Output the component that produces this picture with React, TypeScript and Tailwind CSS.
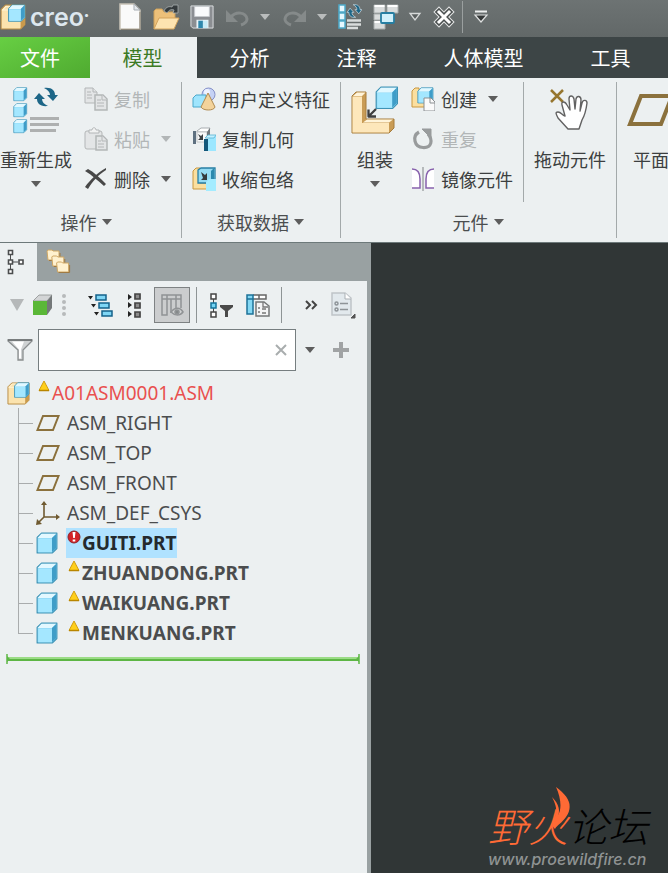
import type { ReactNode } from 'react';
import clsx from 'clsx';

type IconProps = { className?: string };

const tabs = [
  { label: '分析', width: 'w-[107px]' },
  { label: '注释', width: 'w-[107px]' },
  { label: '人体模型', width: 'w-[147px]' },
  { label: '工具', width: 'w-[107px]' },
];

const datums = ['ASM_RIGHT', 'ASM_TOP', 'ASM_FRONT'];

const parts = [
  { name: 'GUITI.PRT', selected: true },
  { name: 'ZHUANDONG.PRT' },
  { name: 'WAIKUANG.PRT' },
  { name: 'MENKUANG.PRT' },
];

/* ---------- shared shapes ---------- */

function Caret({ className = 'text-[#5d5d5d]' }: IconProps) {
  return (
    <svg width="12" height="8" viewBox="0 0 12 8" className={clsx('shrink-0', className)}>
      <path d="M1 1h10L6 7z" fill="currentColor" />
    </svg>
  );
}

// small blue block, 20x20 in its own units
function Block() {
  return (
    <g strokeLinejoin="round">
      <path d="M1 5l4-4h14v14l-4 4H1z" fill="#8fd8f5" stroke="#3f93b5" />
      <path d="M1.5 5.5L5 1.5h13.5l-4 4z" fill="#e2f8ff" />
      <path d="M14.5 5.5l4-4v13l-4 4z" fill="#3f9dc8" />
      <path d="M2 6h12.500v12.500H2z" fill="#a4e7ff" />
    </g>
  );
}

function CubeIcon() {
  return (
    <svg width="22" height="22" viewBox="0 0 20 20" className="shrink-0">
      <Block />
    </svg>
  );
}

function AsmIcon({ size = 24 }: { size?: number }) {
  return (
    <svg width={size} height={size} viewBox="0 0 24 24" className="shrink-0">
      <path d="M1 5l4-4h18v18l-4 4H1z" fill="#fbe3ae" stroke="#b98d45" strokeLinejoin="round" />
      <path d="M19 10l4-4v13l-4 4z" fill="#c99a4c" />
      <path d="M2 5.500h6M2 6l3.500-4H9" stroke="#fff3d6" fill="none" />
      <g transform="translate(7 0) scale(.84)">
        <Block />
      </g>
    </svg>
  );
}

/* ---------- quick access icons ---------- */

function NewIcon() {
  return (
    <svg width="24" height="28" viewBox="0 0 24 28">
      <path d="M2 1h14l6 6v19H2z" fill="#fafafa" stroke="#c9c3b8" strokeWidth="1.500" />
      <path d="M3 26.500h19V9" fill="none" stroke="#8c8578" />
      <path d="M16 1v6h6z" fill="#e4e8ec" stroke="#a7adb3" />
    </svg>
  );
}

function OpenIcon() {
  return (
    <svg width="28" height="28" viewBox="0 0 28 28">
      <path d="M2 26V8l2-2h6l2 3h11v6" fill="#edc079" stroke="#cda05a" />
      <path d="M2 26l5-11h20l-5 11z" fill="#fde3b0" stroke="#d3a35d" />
      <path d="M12 8c2-4 5-5 8-4l1-2h5v8h-5l1-3c-3-1-5 0-7 3z" fill="#353b3d" stroke="#a9b0b0" strokeWidth=".8" />
    </svg>
  );
}

function SaveIcon() {
  return (
    <svg width="24" height="28" viewBox="0 0 26 28">
      <path d="M1 2h24v24H3l-2-2z" fill="#8b8e92" stroke="#e1e4e6" />
      <path d="M5 2.500h16v11H5z" fill="#fafbfc" stroke="#c6c9cc" />
      <path d="M7 17h13v9H7z" fill="#e9f3f7" />
      <path d="M9 18h5v8H9z" fill="#2e87ac" />
      <path d="M14 18h5v8h-5z" fill="#c7ebf7" />
    </svg>
  );
}

function UndoIcon({ className }: IconProps) {
  return (
    <svg width="27" height="22" viewBox="0 0 27 22" className={className}>
      <path d="M7 11c5-6 15-5 16 2 0 3-3 5-6 6" fill="none" stroke="#858a8a" strokeWidth="3" />
      <path d="M2 4v12h12z" fill="#858a8a" />
    </svg>
  );
}

function RegenArrows() {
  return (
    <g fill="#1d6687">
      <path d="M10 1c8-1 11 3 11 7h3l-5 6-6-6h3c0-3-2-5-6-7z" />
      <path d="M14 19c-8 1-11-3-11-7H0l5-6 6 6H8c0 3 2 5 6 7z" />
    </g>
  );
}

function RegenSmallIcon() {
  return (
    <svg width="24" height="26" viewBox="0 0 24 26">
      {[1, 9, 17].map((y) => (
        <rect key={y} x="1" y={y} width="6" height="7" fill="#e6f8ff" stroke="#4daaca" strokeWidth="1.500" />
      ))}
      <path d="M9 16.500h14M9 20.500h14M9 24h11" stroke="#d9dcdc" strokeWidth="2.500" />
      <g transform="translate(9 0) scale(.62 .7)" stroke="#d7e4e9" strokeWidth="1">
        <RegenArrows />
      </g>
    </svg>
  );
}

function WindowsIcon() {
  return (
    <svg width="28" height="26" viewBox="0 0 28 26">
      <g fill="#d9dcdc" stroke="#a7acac">
        <path d="M2 1h11v8H2zM15 1h11v8H15zM2 10h11v6H2zM2 17h11v8H2z" />
      </g>
      <path d="M2.500 2h10M15.500 2h10M2.500 18h10" stroke="#fff" strokeWidth="2" />
      <rect x="9" y="9" width="13" height="10" rx="1" fill="#d1f0fb" stroke="#267ea2" strokeWidth="1.800" />
    </svg>
  );
}

function CloseWindowIcon() {
  return (
    <svg width="24" height="22" viewBox="0 0 24 22" fill="none" strokeLinecap="square">
      <path d="M7 6l10 10M17 6L7 16" stroke="#e4e6e6" strokeWidth="8" />
      <path d="M7 6l10 10M17 6L7 16" stroke="#4c5151" strokeWidth="6" />
      <path d="M7 6l10 10M17 6L7 16" stroke="#fff" strokeWidth="3" />
    </svg>
  );
}

/* ---------- ribbon icons ---------- */

function RegenIcon() {
  return (
    <svg width="48" height="48" viewBox="0 0 48 48">
      {[1, 17, 33].map((y) => (
        <g key={y} transform={`translate(1 ${y}) scale(.72)`}>
          <Block />
        </g>
      ))}
      <g transform="translate(22 1)">
        <RegenArrows />
      </g>
      <path d="M18 32.500h29M18 38.500h29M18 44.500h26" stroke="#aeb0b0" strokeWidth="3" />
    </svg>
  );
}

function CopyIcon() {
  return (
    <svg width="24" height="24" viewBox="0 0 24 24" fill="#e3e5e6" stroke="#b3b6b7">
      <path d="M1 1h8l4 4v11H1z" />
      <path d="M9 1v4h4M3 5h4M3 8h5M3 11h5" />
      <path d="M11 8h8l4 4v11H11z" strokeWidth="1.500" />
      <path d="M18 8v5h5M13 13h4M13 16h7M13 19h7" />
    </svg>
  );
}

function PasteIcon() {
  return (
    <svg width="24" height="24" viewBox="0 0 24 24" fill="#e3e5e6" stroke="#b3b6b7">
      <rect x="1" y="4" width="17" height="18" rx="2" />
      <path d="M5 6V3h3c0-3 4-3 4 0h3v3z" fill="#f1f2f2" />
      <path d="M12 9h7l4 4v10H12z" strokeWidth="1.500" />
      <path d="M18 9v5h5M14 14h3M14 17h6M14 20h6" />
    </svg>
  );
}

function DeleteIcon() {
  return (
    <svg width="24" height="24" viewBox="0 0 24 24" fill="#484848">
      <path d="M1 4l3-2c6 3 12 9 18 15l-2 2C14 14 8 8 1 4z" />
      <path d="M22 1C14 5 6 13 1 20l3 2C9 14 14 8 22 3z" />
    </svg>
  );
}

function FeatureIcon() {
  return (
    <svg width="24" height="24" viewBox="0 0 24 24">
      <circle cx="16.500" cy="7.500" r="6.500" fill="#c5d2f5" stroke="#8590c8" />
      <circle cx="15" cy="5" r="3" fill="#eef2ff" />
      <path d="M1 11l3-3h10v10l-2 2H1z" fill="#9fe5fd" stroke="#4ba8cb" />
      <path d="M16 6l7 14c-1 4-12 4-14 0z" fill="#f3d39b" stroke="#b08a50" />
    </svg>
  );
}

function CopyGeomIcon() {
  return (
    <svg width="24" height="24" viewBox="0 0 24 24">
      <path d="M1 4h3v13H1z" fill="#5e7080" />
      <path d="M5 4l4-3h9l-2 4H5z" fill="#fff" stroke="#a8adb0" />
      <path d="M5 5h10v10H5z" fill="#f8f9f9" stroke="#c3c6c8" />
      <path d="M15 5l3-4v7l-3 2z" fill="#72787c" />
      <path d="M6 7l3 2 2-2v6H6l2-2z" fill="#3c4144" />
      <path d="M12 12h4v12h-4z" fill="#14587a" />
      <path d="M16 12l3-3h5v15h-8z" fill="#9ce7ff" />
      <path d="M13 11l3-3h8l-2 3z" fill="#c3f1ff" stroke="#57b3d3" strokeWidth=".8" />
    </svg>
  );
}

function ShrinkIcon() {
  return (
    <svg width="24" height="24" viewBox="0 0 24 24">
      <path d="M1 4l3-3h4v15h7v6H1z" fill="#fbdf9f" stroke="#c9973e" />
      <path d="M6 3l3-2h14v11l-4 4H6z" fill="#94dbf3" stroke="#277fa4" strokeWidth="1.300" />
      <path d="M19 4l3-3v11l-3 3z" fill="#2b89ad" />
      <path d="M9 5l4 3 2-2v7H9l2-2z" fill="#343a3d" />
      <path d="M14 15l3-3h7v12H14z" fill="#a4ecff" />
    </svg>
  );
}

function AssembleIcon() {
  return (
    <svg width="48" height="48" viewBox="0 0 48 48" strokeLinejoin="round">
      <path d="M1 10l4-4h10v27h28v9l-5 5H1z" fill="#c99c56" stroke="#a67c3c" />
      <path d="M1.500 10.500H11V37h27v9.500H1.500z" fill="#fde7bb" />
      <path d="M2 10l4-3.500h8.500L11 10zM12 36.500l4-3h26l-4 3z" fill="#fff4da" />
      <g transform="translate(24 0) scale(1.180)">
        <Block />
      </g>
      <path d="M25 23l-7 7M17.500 23.500v7H25" fill="none" stroke="#3f3f3f" strokeWidth="2.300" />
    </svg>
  );
}

function CreateIcon() {
  return (
    <svg width="24" height="24" viewBox="0 0 24 24">
      <path d="M1 4l3-3h4v13h7v6H1z" fill="#fbdf9f" stroke="#c9973e" />
      <g transform="translate(6 0) scale(.84)">
        <Block />
      </g>
      <path d="M13 11h7l4 4v9H13z" fill="#fafafa" stroke="#8b8f92" />
      <path d="M19 11v5h5" fill="none" stroke="#8b8f92" />
    </svg>
  );
}

function RepeatIcon() {
  return (
    <svg width="24" height="24" viewBox="0 0 24 24">
      <path d="M8 5C1 9 3 20 12 20.500S22 13 17 7" fill="none" stroke="#989b9c" strokeWidth="3.200" />
      <path d="M11 2h9v9z" fill="#989b9c" stroke="#989b9c" strokeLinejoin="round" />
    </svg>
  );
}

function MirrorIcon() {
  return (
    <svg width="24" height="24" viewBox="0 0 24 24">
      <path d="M1 2c6 0 8 5 8 10v9H1M23 2c-6 0-8 5-8 10v9h8" fill="#fff" stroke="#8862ad" strokeWidth="1.500" />
      <path d="M12 0v24" stroke="#a3a7a8" strokeWidth="1.500" />
    </svg>
  );
}

function DragIcon() {
  return (
    <svg width="42" height="44" viewBox="0 0 42 44">
      <path d="M2 2l12 12M14 2L2 14" stroke="#96762f" strokeWidth="2.500" />
      <path
        d="M19 41l-10-11c-2-4-3-6 0-6 3 0 4 3 7 4L13 17c-1-4 3-4 5 0l3 5-1-11c0-4 4-4 5 0l1 10 1-10c1-4 5-3 5 1l-1 11 2-8c1-4 5-3 5 0-1 8-2 12-5 17l-3 9z"
        fill="#fff"
        stroke="#626262"
        strokeWidth="1.400"
        strokeLinejoin="round"
      />
    </svg>
  );
}

/* ---------- model tree icons ---------- */

function PlaneIcon({ width = 24, height = 18 }: { width?: number; height?: number }) {
  return (
    <svg width={width} height={height} viewBox="0 0 48 36" className="shrink-0">
      <path d="M14 4h31L34 32H3z" fill="none" stroke="#8b713d" strokeWidth="4" />
    </svg>
  );
}

function CsysIcon() {
  return (
    <svg width="24" height="26" viewBox="0 0 24 26" className="shrink-0">
      <path d="M8 3v14h14M8 17l-6 6" fill="none" stroke="#6f5a31" strokeWidth="1.600" />
      <path d="M8 1l3 4H5zM24 17l-4-3v6zM0 25l1-6 5 5z" fill="#6f5a31" />
    </svg>
  );
}

function TreeTabIcon() {
  return (
    <svg width="18" height="26" viewBox="0 0 18 26" fill="#fff" stroke="#4b4d4e" strokeWidth="1.600">
      <path d="M3.500 6v14M6 13h5" strokeWidth="1" />
      <path d="M1.500 1.500h4v4h-4zM1.500 11h4v4h-4zM1.500 20.500h4v4h-4zM12 11h4v4h-4z" />
    </svg>
  );
}

function FoldersIcon() {
  return (
    <svg width="26" height="26" viewBox="0 0 26 26">
      {[0, 6, 12].map((d) => (
        <g key={d} transform={`translate(${d * 0.8} ${d})`}>
          <path d="M2 2l1-1h4l1 1h6v9H3z" fill="#fff1cf" stroke="#cfa765" />
          <path d="M4 11.500h11V4" fill="none" stroke="#a07a42" />
        </g>
      ))}
    </svg>
  );
}

function GreenCubeIcon() {
  return (
    <svg width="22" height="22" viewBox="0 0 22 22">
      <path d="M1 7l6-6h13l-5 6z" fill="#d3d5d6" stroke="#8d9091" strokeWidth=".8" />
      <path d="M15 7l5-6v13l-5 7z" fill="#747879" />
      <path d="M1 7h14v14H1z" fill="#5ab737" />
    </svg>
  );
}

function ExpandIcon() {
  return (
    <svg width="28" height="26" viewBox="0 0 28 26">
      <path d="M2 4h5L4.500 7.500zM5 12h5l-2.500 3.500zM8 20h5l-2.500 3.500z" fill="#222" />
      <path d="M10 3h10v5H10zM13 11h10v5H13zM16 19h10v5H16z" fill="#7fd6f5" stroke="#14628a" strokeWidth="1.500" />
    </svg>
  );
}

function CollapseIcon() {
  return (
    <svg width="16" height="26" viewBox="0 0 16 26">
      <path d="M2 2l4 3-4 3zM2 10l4 3-4 3zM2 19l4 3-4 3z" fill="#222" />
      <path d="M9 2h5v5H9zM9 11h5v5H9zM9 20h5v5H9z" fill="#8b8b8b" stroke="#444" strokeWidth="1.700" />
    </svg>
  );
}

function ColumnsIcon() {
  return (
    <svg width="24" height="24" viewBox="0 0 24 24" fill="none" stroke="#909395" strokeWidth="1.500">
      <path d="M2 2h19v4H2zM2 6h5v16H2zM11 6v14M16 6v9M21 6v9M7 2v4M16 2v4" />
      <path d="M11 19c4-5 9-5 12 0-3 4-8 4-12 0z" fill="#d1d3d4" />
      <circle cx="17" cy="19" r="2" fill="#85898a" />
    </svg>
  );
}

function TreeFilterIcon() {
  return (
    <svg width="26" height="26" viewBox="0 0 26 26">
      <path d="M4.500 6v15" stroke="#484848" />
      <path d="M2 2h5v5H2zM2 20h5v5H2z" fill="#fff" stroke="#444" strokeWidth="1.500" />
      <path d="M2 11h5v5H2z" fill="#75d5f4" stroke="#14739b" strokeWidth="1.500" />
      <path d="M11 13h13v2l-5 4v6h-3v-6l-5-4z" fill="#4a4a4a" />
    </svg>
  );
}

function ColumnSetupIcon() {
  return (
    <svg width="24" height="24" viewBox="0 0 24 24">
      <path d="M7 2h13v4H7M13 2v4" fill="#fff" stroke="#666" strokeWidth="1.500" />
      <path d="M1 2h6v19H1zM1 6h6" fill="#84d8f4" stroke="#1c7298" strokeWidth="1.500" />
      <path d="M10 9h8l5 4v10H10z" fill="#f3f4f5" stroke="#747778" strokeWidth="1.500" />
      <path d="M17 9v5h5M12 15h2M12 19h2M16 16h4M16 20h4" fill="none" stroke="#777" strokeWidth="1.300" />
    </svg>
  );
}

function SettingsDocIcon() {
  return (
    <svg width="26" height="28" viewBox="0 0 26 28">
      <path d="M2 2h13l6 5v17H2z" fill="#e2e9ed" stroke="#bfc4c8" strokeWidth="1.500" />
      <path d="M15 2v6h6" fill="#fff" stroke="#a9afb3" />
      <g fill="none" stroke="#8e9498" strokeWidth="1.500">
        <circle cx="6.500" cy="12.500" r="1.500" />
        <circle cx="6.500" cy="18.500" r="1.500" />
        <path d="M10 12.500h8M10 18.500h8" />
      </g>
      <path d="M25 23v4h-4z" fill="#555" stroke="#555" />
    </svg>
  );
}

function FunnelIcon() {
  return (
    <svg width="26" height="24" viewBox="0 0 26 24" className="shrink-0">
      <path d="M1 2h24v1l-9 9v10h-5V12L1 3z" fill="#cfd2d3" stroke="#8a8e8f" strokeWidth="1.300" />
      <path d="M5 3.500h12l-3 8v9h-2v-9z" fill="#fff" />
      <path d="M1 2h24" stroke="#6a6e6f" strokeWidth="1.500" />
    </svg>
  );
}

function WarningIcon() {
  return (
    <svg width="12" height="12" viewBox="0 0 12 12" className="shrink-0">
      <path d="M6 1l5 9.500H1z" fill="#ffcf1a" stroke="#d19c10" strokeLinejoin="round" />
      <path d="M1 10.500h10" stroke="#b98600" strokeWidth="1.500" />
    </svg>
  );
}

function ErrorIcon() {
  return (
    <svg width="14" height="14" viewBox="0 0 14 14" className="shrink-0">
      <circle cx="7" cy="7" r="6" fill="#d22329" stroke="#8f2226" />
      <path d="M5.500 2h3l-.7 6H6.200zM5.700 9.500h2.600v2H5.700z" fill="#fff" />
    </svg>
  );
}

function Flame() {
  return (
    <svg width="24" height="44" viewBox="0 0 24 44">
      <path d="M6 0c14 10 17 20 10 30-4 6-9 8-11 12C-1 36 5 33 8 28c4-6 3-17-2-28z" fill="#ff6a35" />
      <path d="M2 10c7 7 9 14 5 22l-4 5c-1-5 2-6 3-10 1-6-1-11-4-17zM19 14c1 9-2 16-10 22l-3 4c1-5 11-13 13-26z" fill="#ff6a35" />
    </svg>
  );
}

/* ---------- ribbon pieces ---------- */

function Command({ icon, label, caret, disabled }: { icon: ReactNode; label: string; caret?: boolean; disabled?: boolean }) {
  return (
    <button
      type="button"
      disabled={disabled}
      className={clsx('flex h-10 items-center gap-1.5 whitespace-nowrap', disabled ? 'text-[#b2b6b7]' : 'text-[#3c3f40]')}
    >
      {icon}
      <span>{label}</span>
      {caret && <Caret className={clsx('ml-1', disabled ? 'text-[#b2b6b7]' : 'text-[#5d5d5d]')} />}
    </button>
  );
}

function BigCommand({ icon, label, caret }: { icon: ReactNode; label: string; caret?: boolean }) {
  return (
    <button type="button" className="flex flex-col items-center whitespace-nowrap text-[#3c3f40]">
      <span className="flex h-[62px] items-center">{icon}</span>
      <span className="h-9 leading-9">{label}</span>
      {caret && <Caret className="mt-[3px] text-[#5d5d5d]" />}
    </button>
  );
}

function Group({ label, children, className }: { label?: string; children: ReactNode; className?: string }) {
  return (
    <section className={clsx('flex shrink-0 flex-col', className)}>
      <div className="flex h-[125px] items-start">{children}</div>
      {label && (
        <button type="button" className="flex h-10 items-center justify-center gap-1 text-[#4b4e4f]">
          {label}
          <Caret />
        </button>
      )}
    </section>
  );
}

function Branch({ last }: { last?: boolean }) {
  return (
    <span className="flex h-[30px] w-[18px] shrink-0 flex-col pr-[3px]">
      <span className="h-4 border-b border-l border-[#a9acad]" />
      {!last && <span className="flex-1 border-l border-[#a9acad]" />}
    </span>
  );
}

function ToolButton({ label, children, className }: { label: string; children: ReactNode; className?: string }) {
  return (
    <button type="button" aria-label={label} className={clsx('flex h-9 shrink-0 items-center justify-center', className)}>
      {children}
    </button>
  );
}

function QuickAccess() {
  return (
    <header className="flex h-[37px] items-center bg-linear-to-b from-[#6d7373] to-[#626868] pb-1">
      <div className="flex w-[118px] shrink-0 items-center gap-1">
        <AsmIcon size={26} />
        <span className="font-['Inter'] text-[25px] leading-7 font-semibold text-[#dde7ee]">
          creo<sup className="-top-2 text-[10px]">•</sup>
        </span>
      </div>
      <div className="flex shrink-0 items-center gap-2.5">
        <ToolButton label="新建"><NewIcon /></ToolButton>
        <ToolButton label="打开"><OpenIcon /></ToolButton>
        <ToolButton label="保存"><SaveIcon /></ToolButton>
        <ToolButton label="撤消" className="gap-2"><UndoIcon /><Caret className="text-[#b9bcbc]" /></ToolButton>
        <ToolButton label="重做" className="gap-2"><UndoIcon className="-scale-x-100" /><Caret className="text-[#b9bcbc]" /></ToolButton>
        <ToolButton label="重新生成"><RegenSmallIcon /></ToolButton>
        <ToolButton label="窗口" className="gap-2">
          <WindowsIcon />
          <svg width="14" height="10" viewBox="0 0 14 10">
            <path d="M2 1.500h10L7 8z" fill="#5a5f5f" stroke="#d7d9d9" strokeWidth="1.300" />
          </svg>
        </ToolButton>
        <div className="flex items-center gap-1.5">
          <ToolButton label="关闭"><CloseWindowIcon /></ToolButton>
          <span className="h-8 w-px bg-[#9a9f9f]" />
        </div>
        <ToolButton label="自定义">
          <svg width="16" height="14" viewBox="0 0 16 14">
            <path d="M2 1.500h12" stroke="#eceeee" strokeWidth="2" />
            <path d="M2 5h12l-6 7z" fill="#343838" stroke="#dfe1e1" strokeWidth="1.200" />
          </svg>
        </ToolButton>
      </div>
    </header>
  );
}

function Ribbon() {
  return (
    <div className="flex h-[165px] border-b border-[#6d797a] bg-[#ecf0f1] pt-px text-lg leading-6">
      <Group label="操作" className="w-[181px] pr-2">
        <div className="w-[84px] shrink-0">
          <BigCommand icon={<RegenIcon />} label="重新生成" caret />
        </div>
        <div>
          <Command icon={<CopyIcon />} label="复制" disabled />
          <Command icon={<PasteIcon />} label="粘贴" caret disabled />
          <Command icon={<DeleteIcon />} label="删除" caret />
        </div>
      </Group>
      <span className="mt-[3px] h-[156px] w-px shrink-0 bg-[#a3a9aa]" />
      <Group label="获取数据" className="w-[158px]">
        <div className="pl-2.5">
          <Command icon={<FeatureIcon />} label="用户定义特征" />
          <Command icon={<CopyGeomIcon />} label="复制几何" />
          <Command icon={<ShrinkIcon />} label="收缩包络" />
        </div>
      </Group>
      <span className="mt-[3px] h-[156px] w-px shrink-0 bg-[#a3a9aa]" />
      <Group label="元件" className="w-[275px]">
        <div className="w-[70px] shrink-0 pl-2.5">
          <BigCommand icon={<AssembleIcon />} label="组装" caret />
        </div>
        <div className="w-[112px] shrink-0">
          <Command icon={<CreateIcon />} label="创建" caret />
          <Command icon={<RepeatIcon />} label="重复" disabled />
          <Command icon={<MirrorIcon />} label="镜像元件" />
        </div>
        <span className="mt-[3px] h-[120px] w-px shrink-0 bg-[#a3a9aa]" />
        <div className="pl-2.5">
          <BigCommand icon={<DragIcon />} label="拖动元件" />
        </div>
      </Group>
      <span className="mt-[3px] h-[156px] w-px shrink-0 bg-[#a3a9aa]" />
      <Group>
        <div className="pl-2.5">
          <BigCommand icon={<PlaneIcon width={48} height={36} />} label="平面" />
        </div>
      </Group>
    </div>
  );
}

function ModelTree() {
  return (
    <div className="pt-[7px] font-['Noto_Sans','Noto_Sans_CJK_SC',sans-serif] text-[19px] leading-[30px] text-[#4b4d4e]">
      <div className="flex h-[30px] items-center pl-[7px]">
        <AsmIcon size={23} />
        <span className="ml-2 flex h-[30px] items-start pt-0.5"><WarningIcon /></span>
        <span className="ml-0.5 text-[#e9504f]">A01ASM0001.ASM</span>
      </div>
      <ul className="pl-[18px]">
        {datums.map((name) => (
          <li key={name} className="flex h-[30px] items-center">
            <Branch />
            <PlaneIcon />
            <span className="ml-[7px]">{name}</span>
          </li>
        ))}
        <li className="flex h-[30px] items-center">
          <Branch />
          <CsysIcon />
          <span className="ml-[7px]">ASM_DEF_CSYS</span>
        </li>
        {parts.map((part, i) => (
          <li key={part.name} className="flex h-[30px] items-center">
            <Branch last={i === parts.length - 1} />
            <span className="w-[30px] shrink-0"><CubeIcon /></span>
            <span className={clsx('flex h-[30px] items-start pr-px font-bold', part.selected && 'bg-[#b0e2ff] text-[#242a2d]')}>
              <span className="flex w-4 shrink-0 justify-center pt-0.5">
                {part.selected ? <ErrorIcon /> : <WarningIcon />}
              </span>
              {part.name}
            </span>
          </li>
        ))}
      </ul>
      <svg className="mx-1.5 mt-1.5 block h-[10px] w-[354px]" viewBox="0 0 354 10">
        <path d="M1 4h352" stroke="#9bdc86" strokeWidth="2" />
        <path d="M1 6h352" stroke="#5db645" strokeWidth="2" />
        <path d="M1 0v10M353 0v10" stroke="#5db645" strokeWidth="1.500" />
        <path d="M1 2l3 3-3 3zM353 2l-3 3 3 3z" fill="#5db645" />
      </svg>
    </div>
  );
}

function Sidebar() {
  return (
    <aside className="w-[371px] shrink-0 border-r-4 border-[#99a1a2] bg-[#ecf0f1]">
      <div className="flex h-[38px] items-center bg-[#99a1a2]">
        <button type="button" aria-label="模型树" className="flex h-full w-[37px] items-center justify-center bg-[#ecf0f1] pr-1.5">
          <TreeTabIcon />
        </button>
        <button type="button" aria-label="文件夹" className="ml-2">
          <FoldersIcon />
        </button>
      </div>

      <div className="flex h-12 items-center pl-2.5">
        <div className="flex items-center gap-2">
          <svg width="14" height="12" viewBox="0 0 14 12">
            <path d="M0 0h14L7 12z" fill="#b5b8b9" />
          </svg>
          <GreenCubeIcon />
          <svg width="4" height="24" viewBox="0 0 4 24" fill="#b7babb">
            <circle cx="2" cy="3" r="2" />
            <circle cx="2" cy="9" r="2" />
            <circle cx="2" cy="15" r="2" />
            <circle cx="2" cy="21" r="2" />
          </svg>
        </div>
        <div className="ml-5 flex items-center gap-3">
          <ToolButton label="展开"><ExpandIcon /></ToolButton>
          <ToolButton label="折叠"><CollapseIcon /></ToolButton>
          <ToolButton label="显示列" className="w-9 border border-[#7e8283] bg-[#cbcdce]"><ColumnsIcon /></ToolButton>
        </div>
        <span className="mx-1.5 h-9 w-px bg-[#8e9495]" />
        <div className="ml-1.5 flex items-center gap-[11px]">
          <ToolButton label="树过滤器"><TreeFilterIcon /></ToolButton>
          <ToolButton label="树列"><ColumnSetupIcon /></ToolButton>
          <span className="h-9 w-px bg-[#8e9495]" />
        </div>
        <div className="ml-[22px] flex items-center gap-3">
          <ToolButton label="更多">
            <svg width="14" height="10" viewBox="0 0 14 10">
              <path d="M2 1l4 4-4 4M8 1l4 4-4 4" fill="none" stroke="#444" strokeWidth="2" />
            </svg>
          </ToolButton>
          <ToolButton label="设置"><SettingsDocIcon /></ToolButton>
        </div>
      </div>

      <div className="flex h-[42px] items-center pl-[7px]">
        <FunnelIcon />
        <div className="ml-[5px] flex h-full w-[258px] items-center border border-[#767e80] bg-white">
          <input type="text" aria-label="搜索" className="h-full min-w-0 flex-1 px-2 text-base outline-none" />
          <button type="button" aria-label="清除" className="mr-[7px]">
            <svg width="14" height="14" viewBox="0 0 14 14">
              <path d="M2 2l10 10M12 2L2 12" stroke="#a9adae" strokeWidth="2" />
            </svg>
          </button>
        </div>
        <button type="button" aria-label="搜索选项" className="ml-2"><Caret /></button>
        <button type="button" aria-label="添加" className="ml-4">
          <svg width="18" height="18" viewBox="0 0 18 18">
            <path d="M9 1v16M1 9h16" stroke="#a0a3a4" strokeWidth="4" />
          </svg>
        </button>
      </div>

      <ModelTree />
    </aside>
  );
}

export default function App() {
  return (
    <div className="flex min-h-screen flex-col overflow-hidden bg-[#303636] font-['Noto_Sans_CJK_SC',sans-serif]">
      <QuickAccess />
      <nav className="flex h-[41px] bg-[#3d4546] text-xl text-white">
        <button type="button" className="w-[90px] shrink-0 bg-linear-to-br from-[#67cf43] to-[#4faa30] pr-2.5">文件</button>
        <button type="button" className="w-[107px] shrink-0 bg-[#ecf0f1] pr-0.5 text-[#3c7a25]">模型</button>
        {tabs.map((tab) => (
          <button key={tab.label} type="button" className={clsx('shrink-0 pr-0.5', tab.width)}>
            {tab.label}
          </button>
        ))}
      </nav>
      <Ribbon />
      <div className="flex flex-1">
        <Sidebar />
        <main className="flex flex-1 items-end justify-end pr-5 pb-1.5">
          <div className="italic">
            <div className="relative flex justify-between text-[40px] leading-[44px] font-light">
              <span className="text-[#ff6a35]">野火</span>
              <span className="text-black">论坛</span>
              <span className="absolute -top-4 left-[62px]"><Flame /></span>
            </div>
            <a href="#" className="mt-1 block font-['Inter'] text-base leading-4 font-medium text-[#8f9393]">www.proewildfire.cn</a>
          </div>
        </main>
      </div>
    </div>
  );
}
